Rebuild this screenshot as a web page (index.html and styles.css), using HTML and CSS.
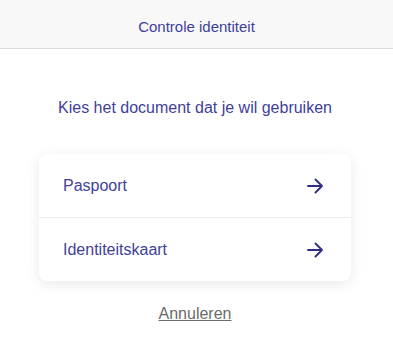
FILE: index.html
```html
<!DOCTYPE html>
<html lang="nl">
<head>
<meta charset="utf-8">
<link rel="stylesheet" href="styles.css">
</head>
<body>
<header class="topbar">Controle identiteit</header>
<main class="content">
  <h1 class="prompt">Kies het document dat je wil gebruiken</h1>
  <div class="card">
    <a class="option" href="#">
      <span>Paspoort</span>
      <svg class="arrow" width="16" height="16" viewBox="0 0 16 16"><path d="M1 8h14M8.5 1.5L15 8l-6.5 6.5" fill="none" stroke="#2d2d87" stroke-width="1.8" stroke-linecap="round" stroke-linejoin="round"/></svg>
    </a>
    <a class="option" href="#">
      <span>Identiteitskaart</span>
      <svg class="arrow" width="16" height="16" viewBox="0 0 16 16"><path d="M1 8h14M8.5 1.5L15 8l-6.5 6.5" fill="none" stroke="#2d2d87" stroke-width="1.8" stroke-linecap="round" stroke-linejoin="round"/></svg>
    </a>
  </div>
  <a class="cancel" href="#">Annuleren</a>
</main>
</body>
</html>
```
FILE: styles.css
```css
* { box-sizing: border-box; }
html, body { margin: 0; padding: 0; background: #fff; }
body { font-family: "Liberation Sans", Arial, sans-serif; color: #3f3f9b; }
.topbar {
  height: 49px;
  background: #f8f8f8;
  border-bottom: 1px solid #dcdcdc;
  display: flex;
  align-items: center;
  justify-content: center;
  font-size: 15px;
  color: #3f3f9b;
  padding-top: 4px;
}
.content {
  display: flex;
  flex-direction: column;
  align-items: center;
  padding: 0 42px 0 39px;
}
.prompt {
  margin: 50px 0 0;
  height: 18px;
  font-size: 16px;
  font-weight: normal;
  line-height: 18px;
  color: #3f3f9b;
}
.card {
  margin-top: 37px;
  width: 312px;
  background: #fff;
  border-radius: 8px;
  box-shadow: 0 3px 14px rgba(0,0,0,0.09);
  display: flex;
  flex-direction: column;
}
.option {
  display: flex;
  align-items: center;
  justify-content: space-between;
  height: 63px;
  padding: 0 28px 0 24px;
  font-size: 16px;
  color: #3f3f9b;
  text-decoration: none;
}
.option + .option { border-top: 1px solid #eeeeee; height: 64px; }
.arrow { display: block; }
.cancel {
  margin-top: 24px;
  font-size: 16px;
  color: #6b6b6b;
  text-decoration: underline;
}
```
